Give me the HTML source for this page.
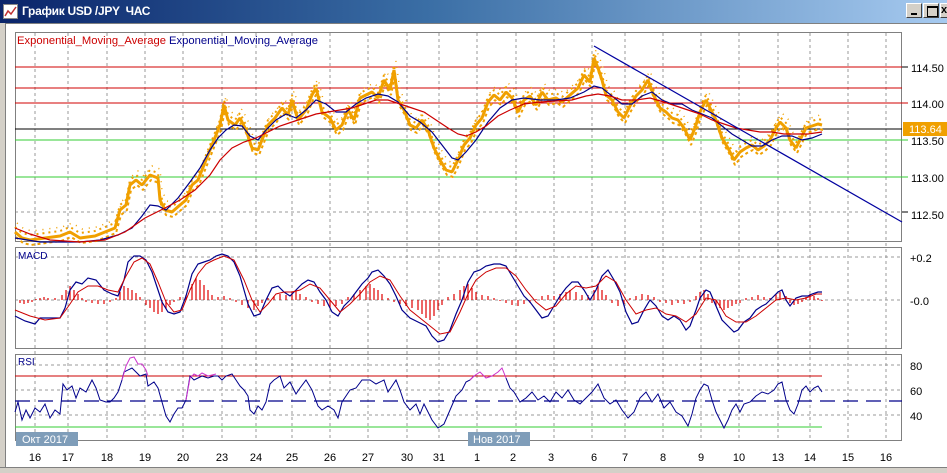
<!DOCTYPE html>
<html><head><meta charset="utf-8"><style>
body{margin:0;width:947px;height:473px;overflow:hidden;background:#d4d0c8;font-family:"Liberation Sans","Noto Sans CJK SC",sans-serif;}
#title{position:absolute;left:0;top:0;width:947px;height:23px;background:linear-gradient(90deg,#0a246a 0%,#3a6ea5 45%,#a6caf0 100%);}
#title span{position:absolute;left:22px;top:4px;color:#fff;font-weight:bold;font-size:12px;letter-spacing:-0.3px;}
#body{position:absolute;left:5px;top:23px;width:942px;height:444px;background:#fff;border-top:1px solid #808080;border-left:1px solid #808080;}
</style></head><body>
<div id="title">
<svg width="16" height="16" style="position:absolute;left:3px;top:4px"><rect x="0.5" y="0.5" width="14" height="14" fill="#fff" stroke="#888"/><polyline points="2,12 5,7 8,10 13,3" fill="none" stroke="#c03030" stroke-width="1.5"/></svg>
<span>График USD /JPY &nbsp;ЧАС</span>
<div style="position:absolute;left:906px;top:3px;width:16px;height:15px;background:#d4d0c8;border:1px solid;border-color:#fff #404040 #404040 #fff;box-sizing:border-box"><div style="position:absolute;left:4px;top:9px;width:6px;height:2px;background:#000"></div></div>
<div style="position:absolute;left:923px;top:3px;width:16px;height:15px;background:#d4d0c8;border:1px solid;border-color:#fff #404040 #404040 #fff;box-sizing:border-box"><div style="position:absolute;left:3px;top:2px;width:9px;height:8px;border:1px solid #000;border-top-width:2px"></div></div>
<div style="position:absolute;left:940px;top:3px;width:10px;height:15px;background:#d4d0c8;border:1px solid;border-color:#fff #404040 #404040 #fff;box-sizing:border-box;font-size:11px;font-weight:bold;line-height:12px">x</div>
</div>
<div id="body"></div>
<svg width="947" height="473" style="position:absolute;left:0;top:0" font-family="Liberation Sans, sans-serif">
<defs>
<polyline id="pr" fill="none" stroke-linejoin="bevel" points="15,232 22,238 30,240 45,238 60,236 70,232 80,238 95,236 105,232 115,228 120,210 126,205 130,185 136,180 142,185 150,175 158,178 160,200 165,210 172,212 180,205 186,200 192,185 198,180 204,165 210,150 214,140 220,125 224,105 228,120 235,125 240,118 246,130 252,148 258,150 262,140 268,125 275,118 282,108 288,115 292,100 298,120 306,110 312,95 316,88 322,112 330,118 336,130 342,125 348,110 354,120 360,98 366,95 372,92 378,98 384,80 390,90 394,70 398,100 404,110 410,125 416,128 422,120 428,130 434,148 440,160 446,170 452,172 458,160 464,145 470,138 476,125 482,118 488,102 494,95 500,100 506,92 512,98 518,112 524,100 530,96 536,105 542,92 548,100 556,98 562,102 570,95 578,88 584,75 590,82 594,58 598,68 602,80 606,95 612,100 618,112 624,118 630,106 636,96 642,90 648,80 654,96 660,108 666,112 672,118 678,120 684,128 690,140 695,128 700,112 706,100 710,108 716,120 722,138 728,148 734,160 740,152 746,148 752,145 758,150 764,146 770,140 776,128 780,122 786,128 790,140 796,148 800,140 806,128 812,126 818,124 822,125"/>
</defs>
<g stroke="#999" stroke-dasharray="3,3" stroke-width="1">
<line x1="35" y1="33" x2="35" y2="440"/><line x1="68" y1="33" x2="68" y2="440"/><line x1="107" y1="33" x2="107" y2="440"/><line x1="145" y1="33" x2="145" y2="440"/><line x1="183" y1="33" x2="183" y2="440"/><line x1="222" y1="33" x2="222" y2="440"/><line x1="256" y1="33" x2="256" y2="440"/><line x1="292" y1="33" x2="292" y2="440"/><line x1="330" y1="33" x2="330" y2="440"/><line x1="368" y1="33" x2="368" y2="440"/><line x1="407" y1="33" x2="407" y2="440"/><line x1="439" y1="33" x2="439" y2="440"/><line x1="477" y1="33" x2="477" y2="440"/><line x1="516" y1="33" x2="516" y2="440"/><line x1="554" y1="33" x2="554" y2="440"/><line x1="592" y1="33" x2="592" y2="440"/><line x1="625" y1="33" x2="625" y2="440"/><line x1="663" y1="33" x2="663" y2="440"/><line x1="701" y1="33" x2="701" y2="440"/><line x1="739" y1="33" x2="739" y2="440"/><line x1="778" y1="33" x2="778" y2="440"/><line x1="810" y1="33" x2="810" y2="440"/><line x1="848" y1="33" x2="848" y2="440"/><line x1="886" y1="33" x2="886" y2="440"/>
<line x1="15" y1="212" x2="902" y2="212"/><line x1="15" y1="257" x2="902" y2="257"/><line x1="15" y1="300" x2="902" y2="300"/><line x1="15" y1="365" x2="902" y2="365"/><line x1="15" y1="390" x2="902" y2="390"/><line x1="15" y1="415" x2="902" y2="415"/>
</g>
<rect x="15.5" y="32.5" width="886" height="209" fill="none" stroke="#808080"/>
<rect x="15.5" y="247.5" width="886" height="101" fill="none" stroke="#808080"/>
<rect x="15.5" y="354.5" width="886" height="86" fill="none" stroke="#808080"/>
<line x1="15" y1="67" x2="908" y2="67" stroke="#d00000"/>
<line x1="15" y1="88" x2="902" y2="88" stroke="#d00000"/>
<line x1="15" y1="103" x2="908" y2="103" stroke="#d00000"/>
<line x1="15" y1="129" x2="902" y2="129" stroke="#000"/>
<line x1="15" y1="140" x2="908" y2="140" stroke="#33cc33"/>
<line x1="15" y1="177" x2="908" y2="177" stroke="#33cc33"/>
<line x1="902" y1="212" x2="908" y2="212" stroke="#000"/>
<use href="#pr" stroke="#f0a000" stroke-width="3"/>
<use href="#pr" stroke="#f0a000" stroke-width="2" stroke-dasharray="2,4" transform="translate(0,-5)"/>
<use href="#pr" stroke="#f0a000" stroke-width="2" stroke-dasharray="3,3" transform="translate(1,5)"/>
<use href="#pr" stroke="#f0a000" stroke-width="1.5" stroke-dasharray="1,6" transform="translate(2,-9)"/>
<polyline fill="none" stroke="#00008b" stroke-width="1.2" points="15,238 40,242 80,242 100,240 118,235 132,228 142,216 150,205 158,206 166,210 178,198 190,182 200,168 210,150 218,138 226,130 234,125 242,126 250,136 258,140 266,130 276,120 286,114 296,118 306,110 316,100 326,104 336,112 346,112 356,104 366,98 378,94 388,96 398,102 410,116 420,122 432,132 442,145 452,158 458,160 466,152 476,140 488,122 500,108 512,100 524,98 540,100 556,100 570,98 584,92 594,86 602,88 612,96 622,104 632,104 642,96 652,92 662,100 672,104 682,104 692,110 702,114 712,118 722,126 732,134 742,140 752,146 762,146 772,140 782,136 792,136 802,140 812,138 822,134"/>
<polyline fill="none" stroke="#cc0000" stroke-width="1.2" points="15,228 30,234 50,240 80,242 105,240 125,232 145,218 165,208 180,200 195,190 210,175 220,160 232,148 244,142 256,138 268,132 280,126 292,122 304,118 316,114 328,112 340,110 352,108 364,104 376,100 388,100 400,104 412,108 424,112 436,120 448,128 458,134 466,136 476,132 486,126 498,116 510,110 524,104 540,102 556,101 572,100 586,96 598,94 610,96 622,100 636,100 650,98 664,102 676,106 688,110 700,114 712,120 724,124 736,128 748,130 760,132 772,132 784,134 796,134 808,134 822,132"/>
<line x1="594" y1="46" x2="902" y2="222" stroke="#0000a0" stroke-width="1.2"/>
<g stroke="#e00000" stroke-width="1.2">
<path d="M20 300v3M24 300v4M28 300v3M32 300v2M36 300v-1M40 300v-2M44 300v-3M48 300v-2M55 300v-2M62 300v-5M66 300v-10M70 300v-14M74 300v-10M78 300v-6M82 300v-2M86 300v2M92 300v3M98 300v4M104 300v4M110 300v2M116 300v-2M120 300v-8M124 300v-14M128 300v-12M132 300v-10M136 300v-7M140 300v-3M146 300v5M150 300v8M154 300v12M158 300v14M162 300v12M166 300v9M170 300v5M174 300v2M180 300v-3M186 300v-5M192 300v-16M196 300v-22M200 300v-20M204 300v-15M208 300v-10M212 300v-5M218 300v-3M224 300v-4M230 300v-2M236 300v2M242 300v5M248 300v8M254 300v10M258 300v6M262 300v3M268 300v-2M274 300v-4M280 300v-6M286 300v-5M292 300v-8M296 300v-10M300 300v-6M306 300v-3M312 300v2M318 300v4M324 300v6M330 300v8M336 300v6M342 300v4M348 300v-3M354 300v-6M360 300v-10M366 300v-14M370 300v-16M374 300v-12M378 300v-10M382 300v-6M388 300v-2M394 300v2M400 300v4M406 300v6M412 300v8M418 300v10M422 300v14M426 300v18M430 300v20M434 300v16M438 300v10M442 300v5M448 300v-3M454 300v-6M460 300v-10M464 300v-14M468 300v-16M472 300v-12M476 300v-8M482 300v-5M488 300v-4M494 300v-2M500 300v1M506 300v3M512 300v5M518 300v6M524 300v4M530 300v3M536 300v-1M542 300v-4M548 300v-5M554 300v-4M560 300v-6M566 300v-8M570 300v-10M576 300v-8M582 300v-5M588 300v-5M594 300v-10M598 300v-14M602 300v-10M606 300v-5M612 300v3M618 300v6M624 300v4M630 300v-2M636 300v-4M642 300v-6M648 300v-5M654 300v-3M660 300v2M666 300v3M672 300v5M678 300v3M684 300v4M690 300v2M696 300v-4M700 300v-8M704 300v-10M708 300v-6M712 300v3M716 300v6M720 300v8M724 300v10M728 300v8M732 300v6M736 300v4M740 300v3M746 300v-2M752 300v-3M758 300v-5M764 300v-3M770 300v-2M776 300v-6M780 300v-8M786 300v-4M790 300v3M794 300v5M798 300v4M802 300v2M806 300v-3M810 300v-6M814 300v-4M818 300v-2M822 300v1"/>
</g>
<polyline fill="none" stroke="#00008b" stroke-width="1.2" points="15,316 25,321 35,324 40,318 48,318 55,318 60,318 65,308 70,290 76,282 82,284 88,278 96,280 104,290 112,294 118,296 124,280 128,262 134,256 140,256 146,260 152,272 158,290 162,302 168,312 174,314 180,312 186,296 192,274 198,264 204,262 210,260 216,256 222,254 228,256 234,262 240,276 244,290 248,304 254,316 260,314 266,300 272,288 278,286 284,292 290,296 296,290 302,284 308,280 314,282 320,292 326,300 332,312 338,316 344,306 350,300 356,292 362,284 368,278 372,272 378,270 384,276 390,284 396,296 402,310 410,318 418,322 426,326 432,336 438,342 444,340 450,330 456,314 462,300 468,282 474,272 480,270 486,266 494,264 500,264 506,266 512,276 518,286 524,296 530,302 536,310 542,318 548,316 554,306 560,296 566,288 572,282 578,282 584,290 590,300 596,290 602,276 608,270 614,280 620,292 626,312 632,324 638,322 644,310 650,300 656,306 662,316 668,320 674,316 680,320 686,330 690,326 696,310 700,298 706,290 710,292 716,306 722,320 728,326 734,332 738,330 744,322 750,318 756,310 762,306 766,304 772,298 778,292 782,290 786,300 790,306 796,298 802,296 808,296 812,294 818,292 822,292"/>
<polyline fill="none" stroke="#cc0000" stroke-width="1" points="15,310 30,316 45,320 60,318 70,304 78,292 88,286 98,286 108,290 118,292 126,276 134,262 142,258 150,264 158,282 166,302 174,312 182,310 190,290 198,274 206,264 214,260 224,256 234,260 244,280 252,300 260,312 268,304 276,294 284,292 292,292 300,290 310,284 320,288 330,300 340,312 350,304 360,294 370,282 380,276 390,280 400,296 410,310 420,318 430,326 440,334 450,332 460,312 468,294 476,280 486,272 496,268 506,268 516,276 526,290 536,302 546,310 556,306 566,294 576,286 586,288 596,286 606,276 616,282 626,300 636,314 646,310 656,308 666,314 676,316 686,322 696,314 706,298 716,300 726,316 736,322 746,322 756,316 766,308 776,300 786,298 796,300 806,298 816,294 822,294"/>
<line x1="15" y1="376" x2="822" y2="376" stroke="#cc0000"/>
<line x1="15" y1="427" x2="822" y2="427" stroke="#33cc33"/>
<line x1="15" y1="401" x2="902" y2="401" stroke="#00008b" stroke-width="1.3" stroke-dasharray="15,8"/>
<polyline fill="none" stroke="#00008b" stroke-width="1" points="15,412 18,402 22,420 26,410 30,418 35,408 40,412 45,404 50,418 55,410 60,414 63,384 67,390 72,386 76,398 80,388 86,392 92,380 96,388 100,400 106,402 110,402 114,398 118,392 122,380 124,372 132,368 140,376 146,374 148,386 154,382 158,388 162,402 166,416 170,422 174,414 178,408 182,408 186,400 190,376 194,380 198,378 202,376 208,378 214,376 218,376 222,380 226,376 232,374 236,380 240,386 244,390 248,396 250,410 254,414 258,406 262,410 266,402 270,384 274,380 280,376 284,388 290,382 296,394 300,388 306,380 312,390 318,406 322,410 328,406 334,410 338,418 342,402 346,396 350,390 356,388 362,380 370,380 376,384 384,380 388,392 392,386 396,380 400,390 404,402 410,410 416,404 420,414 424,404 428,412 432,420 438,428 444,424 450,410 456,396 462,390 466,382 470,380 474,376"/>
<polyline fill="none" stroke="#cc33cc" stroke-width="1" points="122,380 126,366 130,358 134,357 138,364 142,364 146,370 148,376"/>
<polyline fill="none" stroke="#cc33cc" stroke-width="1" points="186,400 190,378 194,374 198,376 202,373 208,376 216,374"/>
<polyline fill="none" stroke="#cc33cc" stroke-width="1" points="470,380 474,376 480,372 486,378 492,376 498,372 502,368 506,378"/>
<polyline fill="none" stroke="#00008b" stroke-width="1" points="506,378 510,388 514,392 520,402 526,398 532,392 538,400 544,396 550,402 556,392 562,398 568,390 574,400 580,404 586,398 592,392 598,384 604,398 610,404 616,400 622,410 628,418 634,412 640,398 646,392 652,402 658,394 664,408 670,402 676,412 682,416 688,426 692,414 696,398 700,390 704,384 708,386 712,400 716,412 720,420 724,428 728,420 732,410 736,404 740,412 744,404 750,402 756,396 762,392 768,394 774,390 778,384 782,382 786,400 790,410 794,414 798,404 802,390 806,386 810,392 814,388 818,386 822,392"/>
<g font-size="11" fill="#000">
<text x="911" y="72">114.50</text><text x="911" y="108">114.00</text><text x="911" y="145">113.50</text><text x="911" y="182">113.00</text><text x="911" y="219">112.50</text>
<text x="910" y="262">+0.2</text><text x="910" y="305">-0.0</text>
<text x="910" y="370">80</text><text x="910" y="395">60</text><text x="910" y="420">40</text>
</g>
<line x1="902" y1="67" x2="908" y2="67" stroke="#000"/>
<rect x="903" y="122" width="44" height="14" fill="#f0a000"/>
<text x="909" y="133" font-size="11" fill="#fff">113.64</text>
<g font-size="11" fill="#000" text-anchor="middle">
<text x="35" y="461">16</text><text x="68" y="461">17</text><text x="107" y="461">18</text><text x="145" y="461">19</text><text x="183" y="461">20</text><text x="222" y="461">23</text><text x="256" y="461">24</text><text x="292" y="461">25</text><text x="330" y="461">26</text><text x="368" y="461">27</text><text x="407" y="461">30</text><text x="439" y="461">31</text><text x="477" y="461">1</text><text x="513" y="461">2</text><text x="551" y="461">3</text><text x="594" y="461">6</text><text x="625" y="461">7</text><text x="663" y="461">8</text><text x="701" y="461">9</text><text x="739" y="461">10</text><text x="778" y="461">13</text><text x="810" y="461">14</text><text x="848" y="461">15</text><text x="886" y="461">16</text>
</g>
<rect x="16" y="432" width="62" height="14" fill="#7f9db9"/>
<text x="22" y="443" font-size="11" fill="#fff">Окт 2017</text>
<rect x="468" y="432" width="62" height="14" fill="#7f9db9"/>
<text x="473" y="443" font-size="11" fill="#fff">Нов 2017</text>
<text x="17" y="44" font-size="11" fill="#cc0000" textLength="301" lengthAdjust="spacingAndGlyphs">Exponential_Moving_Average <tspan fill="#00008b">Exponential_Moving_Average</tspan></text>
<text x="18" y="259" font-size="10" fill="#00008b">MACD</text>
<text x="18" y="365" font-size="10" fill="#00008b">RSI</text>
<rect x="0" y="467" width="947" height="6" fill="#d4d0c8"/>
<line x1="0" y1="467.5" x2="947" y2="467.5" stroke="#808080"/>
</svg>
</body></html>
